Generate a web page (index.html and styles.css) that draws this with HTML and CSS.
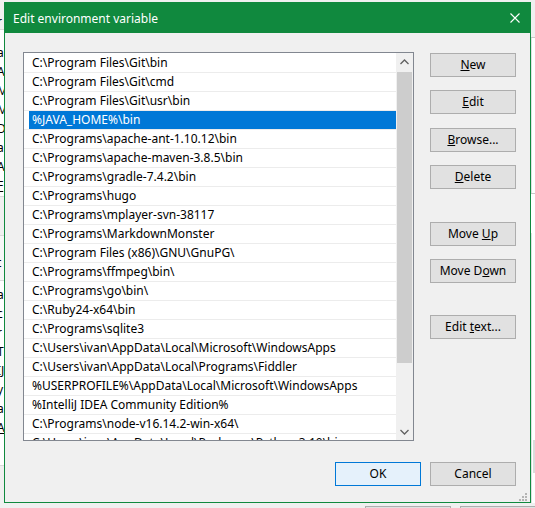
FILE: index.html
```html
<!DOCTYPE html>
<html lang="en">
<head>
<meta charset="UTF-8">
<link rel="stylesheet" href="styles.css">
<title>Edit environment variable</title>
</head>
<body>
<div class="desk">

  <!-- window behind the dialog -->
  <div class="bg-topleft">r</div>
  <div class="bg-panel bg-panel-a">
    <div>a</div><div>A</div><div>M</div><div>M</div><div>Di</div><div>a</div><div>A</div><div><u>F</u></div>
  </div>
  <div class="bg-mid">t</div>
  <div class="bg-panel bg-panel-b">
    <div>a</div><div>c</div><div>r</div><div>T</div><div>IJ</div><div>y</div><div>a</div><div><u>A</u></div>
  </div>
  <div class="bg-right-top"></div>
  <div class="bg-right-panel"></div>
  <div class="bg-right-block"></div>
  <div class="bg-right-box"></div>
  <div class="bg-btn bg-btn-1"></div>
  <div class="bg-btn bg-btn-2"></div>

  <div class="dialog">
    <div class="titlebar">
      <span class="title">Edit environment variable</span>
      <svg class="close" width="10" height="10" viewBox="0 0 10 10">
        <path d="M0.5 0.5 L9.5 9.5 M9.5 0.5 L0.5 9.5" stroke="#fff" stroke-width="1.1" fill="none"/>
      </svg>
    </div>

    <div class="content">
      <div class="listbox">
        <div class="rows">
          <div class="row"><span>C:\Program Files\Git\bin</span></div>
          <div class="row"><span>C:\Program Files\Git\cmd</span></div>
          <div class="row"><span>C:\Program Files\Git\usr\bin</span></div>
          <div class="row sel"><span>%JAVA_HOME%\bin</span></div>
          <div class="row"><span>C:\Programs\apache-ant-1.10.12\bin</span></div>
          <div class="row"><span>C:\Programs\apache-maven-3.8.5\bin</span></div>
          <div class="row"><span>C:\Programs\gradle-7.4.2\bin</span></div>
          <div class="row"><span>C:\Programs\hugo</span></div>
          <div class="row"><span>C:\Programs\mplayer-svn-38117</span></div>
          <div class="row"><span>C:\Programs\MarkdownMonster</span></div>
          <div class="row"><span>C:\Program Files (x86)\GNU\GnuPG\</span></div>
          <div class="row"><span>C:\Programs\ffmpeg\bin\</span></div>
          <div class="row"><span>C:\Programs\go\bin\</span></div>
          <div class="row"><span>C:\Ruby24-x64\bin</span></div>
          <div class="row"><span>C:\Programs\sqlite3</span></div>
          <div class="row"><span>C:\Users\ivan\AppData\Local\Microsoft\WindowsApps</span></div>
          <div class="row"><span>C:\Users\ivan\AppData\Local\Programs\Fiddler</span></div>
          <div class="row"><span>%USERPROFILE%\AppData\Local\Microsoft\WindowsApps</span></div>
          <div class="row"><span>%IntelliJ IDEA Community Edition%</span></div>
          <div class="row"><span>C:\Programs\node-v16.14.2-win-x64\</span></div>
          <div class="row"><span>C:\Users\ivan\AppData\Local\Packages\Python.3.10\bin</span></div>
        </div>
        <div class="vscroll">
          <div class="arrow">
            <svg width="9" height="6" viewBox="0 0 9 6"><path d="M0.5 5 L4.5 1 L8.5 5" stroke="#606060" stroke-width="1.3" fill="none"/></svg>
          </div>
          <div class="thumb"></div>
          <div class="track"></div>
          <div class="arrow">
            <svg width="9" height="6" viewBox="0 0 9 6"><path d="M0.5 1 L4.5 5 L8.5 1" stroke="#606060" stroke-width="1.3" fill="none"/></svg>
          </div>
        </div>
      </div>

      <div class="side">
        <button class="btn b-new"><u>N</u>ew</button>
        <button class="btn b-edit"><u>E</u>dit</button>
        <button class="btn b-browse"><u>B</u>rowse...</button>
        <button class="btn b-delete"><u>D</u>elete</button>
        <button class="btn b-up">Move <u>U</u>p</button>
        <button class="btn b-down">Move D<u>o</u>wn</button>
        <button class="btn b-text">Edit <u>t</u>ext...</button>
      </div>
    </div>

    <div class="footer">
      <button class="btn default">OK</button>
      <button class="btn">Cancel</button>
    </div>

    <svg class="grip" width="10" height="10" viewBox="0 0 10 10" fill="#b4b4b4">
      <rect x="7" y="1" width="2" height="2"/>
      <rect x="4" y="4" width="2" height="2"/><rect x="7" y="4" width="2" height="2"/>
      <rect x="1" y="7" width="2" height="2"/><rect x="4" y="7" width="2" height="2"/><rect x="7" y="7" width="2" height="2"/>
    </svg>
  </div>

</div>
</body>
</html>
```

FILE: styles.css
```css
* { box-sizing: border-box; }
body { margin: 0; font-family: "Noto Sans", "Open Sans", sans-serif; font-size: 12px; color: #000; }
.desk { position: relative; width: 535px; height: 508px; overflow: hidden; background: #f0f0f0; }

/* background window, mostly hidden */
.bg-topleft { position: absolute; left: -3px; top: 13px; line-height: 18px; }
.bg-panel { position: absolute; left: 0; width: 40px; background: #fff; border-top: 1px solid #dadada; border-bottom: 1px solid #dadada; }
.bg-panel div { line-height: 19px; height: 19px; margin-left: -3px; }
.bg-panel-a { top: 29px; height: 168px; padding-top: 13px; }
.bg-panel-b { top: 280px; height: 186px; padding-top: 4px; }
.bg-mid { position: absolute; left: -3px; top: 235px; width: 40px; height: 45px; border-top: 1px solid #dadada; background: #f7f7f7; padding-top: 18px; line-height: 18px; }
.bg-right-top { position: absolute; left: 531px; top: 37px; width: 10px; height: 1px; background: #c8c8c8; }
.bg-right-panel { position: absolute; left: 531px; top: 38px; width: 10px; height: 465px; background: #fff; border-left: 1px solid #e0e0e0; }
.bg-right-block { position: absolute; left: 531px; top: 193px; width: 10px; height: 40px; border-top: 1px solid #c8c8c8; background: #fff; }
.bg-right-box { position: absolute; left: 533px; top: 440px; width: 10px; height: 33px; background: #dcdcdc; }
.bg-btn { position: absolute; top: 506px; height: 24px; border: 1px solid #adadad; background: #e1e1e1; }
.bg-btn-1 { left: 365px; width: 86px; }
.bg-btn-2 { left: 460px; width: 86px; }

/* dialog */
.dialog { position: absolute; left: 4px; top: 2px; width: 527px; height: 501px; border: 1px solid #10893e; background: #f0f0f0; }
.titlebar { height: 30px; background: #10893e; color: #fff; display: flex; align-items: center; padding-left: 8px; }
.title { flex: 1; }
.close { margin-right: 10px; }

.content { display: flex; gap: 16px; padding: 19px 14px 0 18px; }
.listbox { width: 391px; height: 389px; border: 1px solid #828790; background: #fff; display: flex; }
.rows { flex: 1; padding-top: 1px; overflow: hidden; }
.row { height: 19px; border-bottom: 1px solid #ececec; padding-left: 5px; white-space: nowrap; }
.row span { display: block; height: 18px; line-height: 18px; padding-left: 3px; }
.row.sel span { background: #0078d7; color: #fff; }

.vscroll { width: 17px; background: #f0f0f0; display: flex; flex-direction: column; }
.arrow { height: 17px; display: flex; align-items: center; justify-content: center; }
.thumb { height: 291px; margin: 2px 1px 0 1px; background: #cdcdcd; }
.track { flex: 1; }

.side { display: flex; flex-direction: column; width: 86px; }
.btn { display: block; width: 86px; height: 24px; padding: 0; border: 1px solid #adadad; background: #e1e1e1; font: inherit; line-height: 22px; text-align: center; color: #000; white-space: nowrap; }
.b-new { margin-top: 1px; }
.b-edit { margin-top: 13px; }
.b-browse { margin-top: 14px; }
.b-delete { margin-top: 13px; }
.b-up { margin-top: 33px; }
.b-down { margin-top: 13px; }
.b-text { margin-top: 32px; }

.footer { display: flex; justify-content: flex-end; gap: 9px; padding: 21px 14px 0 0; }
.btn.default { border-color: #0078d7; background: #e5f1fb; }

.grip { position: absolute; right: 2px; bottom: 0; }
```
